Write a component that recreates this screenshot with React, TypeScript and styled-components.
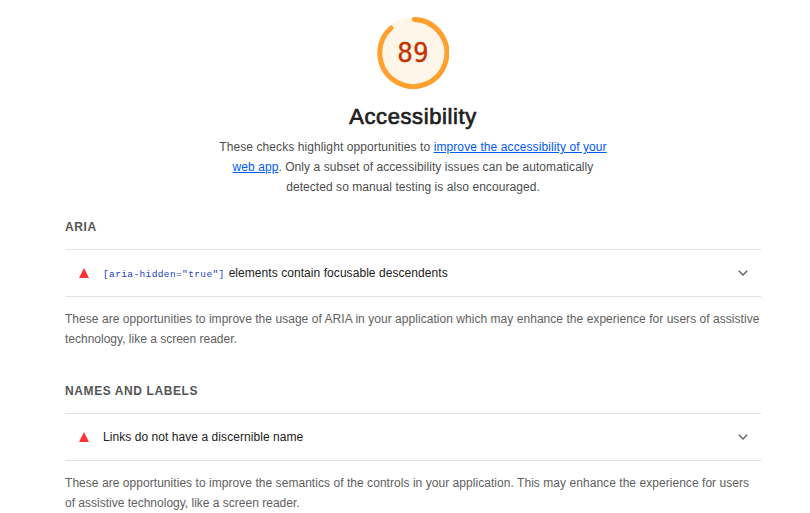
import React from "react";
import styled, { createGlobalStyle } from "styled-components";

const GlobalStyle = createGlobalStyle`
  body {
    margin: 0;
    background: #fff;
    font-family: "Liberation Sans", Arial, sans-serif;
    font-size: 12px;
    line-height: 20px;
    overflow: hidden;
  }
`;

const Page = styled.main`
  box-sizing: border-box;
  width: 810px;
  height: 513px;
  padding: 17px 49px 0 65px;
  overflow: hidden;
`;

const Header = styled.header`
  display: flex;
  flex-direction: column;
  align-items: center;
`;

const Gauge = styled.div`
  display: grid;
  width: 72px;
  height: 72px;
  place-items: center;

  > * {
    grid-area: 1 / 1;
  }
`;

const Score = styled.span`
  color: #c33300;
  font: 26px/36px "DejaVu Sans Mono", monospace;
  -webkit-text-stroke: 0.3px #c33300;
`;

const Title = styled.h1`
  margin: 13px 0 6px;
  color: #212121;
  font-size: 22px;
  font-weight: 500;
  line-height: 29px;
  letter-spacing: 0.6px;
  -webkit-text-stroke: 0.7px #212121;
`;

const Line = styled.span<{ $spacing?: number }>`
  display: block;
  white-space: nowrap;
  letter-spacing: ${({ $spacing = 0 }) => $spacing}px;
`;

const Intro = styled.p`
  margin: 0;
  color: #4d4d4d;
  text-align: center;
`;

const Link = styled.a`
  color: #005af5;
  text-decoration: underline;
`;

const Group = styled.section<{ $top: number }>`
  margin-top: ${({ $top }) => $top}px;
`;

const GroupTitle = styled.h2`
  margin: 0 0 12px;
  color: #555;
  font-size: 12px;
  line-height: 20px;
  letter-spacing: 0.6px;
`;

const Audit = styled.div`
  box-sizing: border-box;
  display: flex;
  align-items: center;
  height: 48px;
  padding: 0 13px 0 14px;
  border: solid #e3e3e3;
  border-width: 1px 0;
  color: #212121;
`;

const AuditTitle = styled.div`
  display: flex;
  flex: 1;
  gap: 4px;
  margin-left: 14px;
  white-space: nowrap;
  letter-spacing: 0.06px;
`;

const Code = styled.code`
  padding-top: 2px;
  margin-bottom: -2px;
  color: #1a3fbf;
  font: 9.5px/20px "Liberation Mono", monospace;
  letter-spacing: 0.38px;
`;

const Description = styled.p`
  margin: 12px 0 0;
  color: #616161;
`;

const FailIcon = () => (
  <svg width="10" height="10" viewBox="0 0 10 10">
    <path d="M5 0 10 10H0Z" fill="#ff3131" />
  </svg>
);

const Chevron = () => (
  <svg width="10" height="6" viewBox="0 0 10 6" fill="none" stroke="#616161" strokeWidth="1.4">
    <path d="M.8.8 5 4.9 9.2.8" />
  </svg>
);

export default function App() {
  return (
    <>
      <GlobalStyle />
      <Page>
        <Header>
          <Gauge>
            <svg width="72" height="72" viewBox="0 0 72 72">
              <circle cx="36" cy="36" r="36" fill="#fff6ea" />
              <path
                d="M37.2 2.5A33.5 33.5 0 1 1 14 11"
                fill="none"
                stroke="#ffa02f"
                strokeWidth="5"
                strokeLinecap="round"
              />
            </svg>
            <Score>89</Score>
          </Gauge>
          <Title>Accessibility</Title>
          <Intro>
            <Line $spacing={0.09}>
              These checks highlight opportunities to <Link>improve the accessibility of your</Link>
            </Line>
            <Line $spacing={0.07}>
              <Link>web app</Link>. Only a subset of accessibility issues can be automatically
            </Line>
            <Line $spacing={0.06}>detected so manual testing is also encouraged.</Line>
          </Intro>
        </Header>
        <Group $top={20}>
          <GroupTitle>ARIA</GroupTitle>
          <Audit>
            <FailIcon />
            <AuditTitle>
              <Code>[aria-hidden="true"]</Code>
              <span>elements contain focusable descendents</span>
            </AuditTitle>
            <Chevron />
          </Audit>
          <Description>
            <Line $spacing={0.042}>
              These are opportunities to improve the usage of ARIA in your application which may enhance the experience for users of assistive
            </Line>
            <Line>technology, like a screen reader.</Line>
          </Description>
        </Group>
        <Group $top={32}>
          <GroupTitle>NAMES AND LABELS</GroupTitle>
          <Audit>
            <FailIcon />
            <AuditTitle>Links do not have a discernible name</AuditTitle>
            <Chevron />
          </Audit>
          <Description>
            <Line $spacing={0.047}>
              These are opportunities to improve the semantics of the controls in your application. This may enhance the experience for users
            </Line>
            <Line>of assistive technology, like a screen reader.</Line>
          </Description>
        </Group>
      </Page>
    </>
  );
}
